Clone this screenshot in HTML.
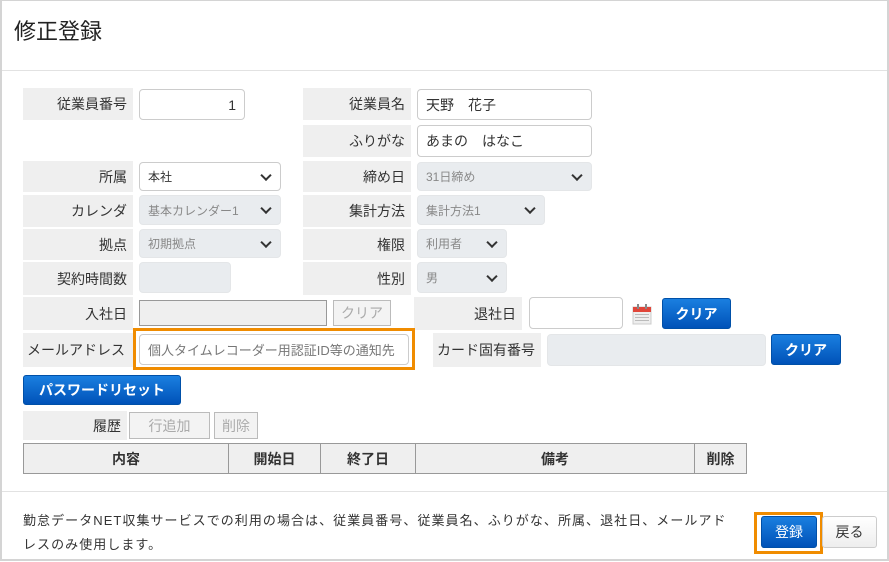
<!DOCTYPE html>
<html><head><meta charset="utf-8"><style>
*{box-sizing:border-box;margin:0;padding:0}
body{width:889px;height:562px;background:#fff;font-family:"Liberation Sans","Noto Sans CJK JP",sans-serif;font-size:14px;color:#333;position:relative;overflow:hidden}
.frame{position:absolute;left:0;top:0;width:889px;height:561px;border:2px solid #d4d4d4;border-top:1px solid #d4d4d4}
.a{position:absolute}
.lb{position:absolute;background:#efefef;text-align:right;padding-right:6px;display:flex;align-items:center;justify-content:flex-end}
.in{position:absolute;border:1px solid #ccc;border-radius:4px;background:#fff;display:flex;align-items:center;padding:0 8px;font-size:14px}
.g{background:#e9ecef;border-color:#e4e6e8;color:#888;font-size:12px}
.chev{position:absolute;right:10px;top:50%;width:8px;height:8px;border-right:2px solid #333;border-bottom:2px solid #333;transform:translateY(-70%) rotate(45deg)}
.bb{position:absolute;background:linear-gradient(#1a7fe0,#0052b8);color:#fff;border:1px solid #0050a8;border-radius:3px;font-weight:bold;display:flex;align-items:center;justify-content:center;font-size:14px}
.gb{position:absolute;background:#f3f3f3;border:1px solid #bbb;color:#aaa;display:flex;align-items:center;justify-content:center;font-size:14px}
table{position:absolute;left:23px;top:443px;border-collapse:collapse}
td{border:1px solid #999;background:#efefef;height:30px;text-align:center;font-weight:bold;font-size:14px}
</style></head><body>
<div class="frame"></div>
<div class="a" style="left:14px;top:14px;font-size:22px;color:#222">修正登録</div>
<div class="a" style="left:2px;top:70px;width:885px;height:1px;background:#e2e2e2"></div>

<div class="lb" style="left:23px;top:88px;width:110px;height:32px">従業員番号</div>
<div class="in" style="left:139px;top:89px;width:106px;height:31px;justify-content:flex-end">1</div>
<div class="lb" style="left:303px;top:88px;width:108px;height:32px">従業員名</div>
<div class="in" style="left:417px;top:89px;width:175px;height:31px">天野　花子</div>
<div class="lb" style="left:303px;top:125px;width:108px;height:32px">ふりがな</div>
<div class="in" style="left:417px;top:125px;width:175px;height:32px">あまの　はなこ</div>

<div class="lb" style="left:23px;top:161px;width:110px;height:31px">所属</div>
<div class="in" style="left:139px;top:162px;width:142px;height:29px;font-size:12px">本社<span class="chev"></span></div>
<div class="lb" style="left:303px;top:161px;width:108px;height:31px">締め日</div>
<div class="in g" style="left:417px;top:162px;width:175px;height:29px">31日締め<span class="chev"></span></div>

<div class="lb" style="left:23px;top:195px;width:110px;height:32px">カレンダ</div>
<div class="in g" style="left:139px;top:195px;width:142px;height:30px">基本カレンダー1<span class="chev"></span></div>
<div class="lb" style="left:303px;top:195px;width:108px;height:32px">集計方法</div>
<div class="in g" style="left:417px;top:195px;width:128px;height:30px">集計方法1<span class="chev"></span></div>

<div class="lb" style="left:23px;top:229px;width:110px;height:31px">拠点</div>
<div class="in g" style="left:139px;top:229px;width:142px;height:29px">初期拠点<span class="chev"></span></div>
<div class="lb" style="left:303px;top:229px;width:108px;height:31px">権限</div>
<div class="in g" style="left:417px;top:229px;width:90px;height:29px">利用者<span class="chev"></span></div>

<div class="lb" style="left:23px;top:262px;width:110px;height:33px">契約時間数</div>
<div class="in g" style="left:139px;top:262px;width:92px;height:31px"></div>
<div class="lb" style="left:303px;top:262px;width:108px;height:33px">性別</div>
<div class="in g" style="left:417px;top:262px;width:90px;height:31px">男<span class="chev"></span></div>

<div class="lb" style="left:23px;top:297px;width:110px;height:33px">入社日</div>
<div class="a" style="left:139px;top:300px;width:188px;height:26px;background:#efefef;border:1px solid #999"></div>
<div class="gb" style="left:333px;top:300px;width:58px;height:26px">クリア</div>
<div class="lb" style="left:414px;top:297px;width:108px;height:33px">退社日</div>
<div class="in" style="left:529px;top:297px;width:94px;height:32px"></div>
<svg class="a" style="left:632px;top:303px" width="20" height="22" viewBox="0 0 20 22"><rect x="1" y="4" width="18" height="17" fill="#eee" stroke="#ccc"/><rect x="1" y="4" width="18" height="5" fill="#e0463a"/><rect x="5" y="1" width="2" height="5" fill="#888"/><rect x="13" y="1" width="2" height="5" fill="#888"/><g fill="#bbb"><rect x="3" y="11" width="14" height="1"/><rect x="3" y="14" width="14" height="1"/><rect x="3" y="17" width="14" height="1"/></g></svg>
<div class="bb" style="left:662px;top:298px;width:69px;height:31px">クリア</div>

<div class="lb" style="left:23px;top:333px;width:110px;height:34px;justify-content:flex-start;padding-left:4px">メールアドレス</div>
<div class="a" style="left:133px;top:328px;width:282px;height:42px;border:3px solid #f08c00"></div>
<div class="in" style="left:139px;top:334px;width:270px;height:31px;color:#777;font-size:13px">個人タイムレコーダー用認証ID等の通知先</div>
<div class="lb" style="left:433px;top:333px;width:108px;height:34px">カード固有番号</div>
<div class="in g" style="left:547px;top:334px;width:219px;height:32px"></div>
<div class="bb" style="left:771px;top:334px;width:70px;height:31px">クリア</div>

<div class="bb" style="left:23px;top:375px;width:158px;height:30px">パスワードリセット</div>

<div class="lb" style="left:23px;top:411px;width:104px;height:29px">履歴</div>
<div class="gb" style="left:129px;top:412px;width:81px;height:27px">行追加</div>
<div class="gb" style="left:214px;top:412px;width:44px;height:27px">削除</div>

<table><tr><td style="width:205px">内容</td><td style="width:92px">開始日</td><td style="width:95px">終了日</td><td style="width:279px">備考</td><td style="width:52px">削除</td></tr></table>

<div class="a" style="left:2px;top:491px;width:885px;height:1px;background:#e2e2e2"></div>
<div class="a" style="left:23px;top:509px;width:740px;font-size:13px;letter-spacing:1.05px;line-height:24px;color:#333;white-space:nowrap">勤怠データNET収集サービスでの利用の場合は、従業員番号、従業員名、ふりがな、所属、退社日、メールアド<br>レスのみ使用します。</div>
<div class="a" style="left:754px;top:512px;width:69px;height:42px;border:3px solid #f08c00"></div>
<div class="bb" style="left:761px;top:516px;width:56px;height:32px;font-weight:normal">登録</div>
<div class="a" style="left:822px;top:516px;width:55px;height:32px;border:1px solid #ccc;border-radius:3px;background:linear-gradient(#fff,#eee);display:flex;align-items:center;justify-content:center">戻る</div>
</body></html>
